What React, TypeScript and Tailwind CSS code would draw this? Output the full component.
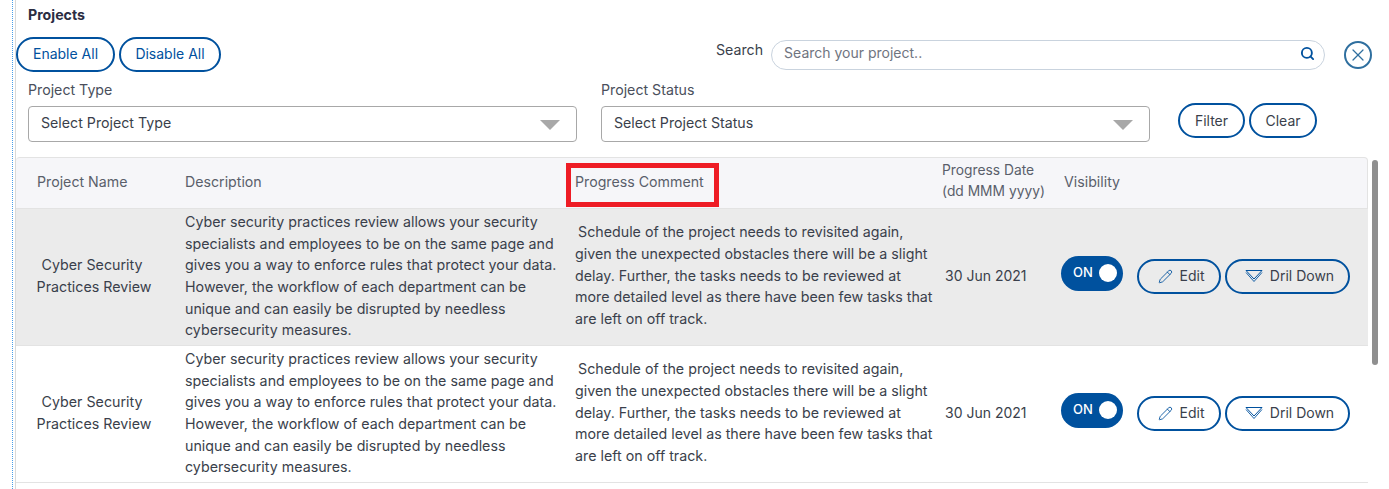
import { Pencil, Search, X } from 'lucide-react'

const description =
  'Cyber security practices review allows your security specialists and employees to be on the same page and gives you a way to enforce rules that protect your data. However, the workflow of each department can be unique and can easily be disrupted by needless cybersecurity measures.'
const comment =
  'Schedule of the project needs to revisited again, given the unexpected obstacles there will be a slight delay. Further, the tasks needs to be reviewed at more detailed level as there have been few tasks that are left on off track.'

const cols = 'grid grid-cols-[169px_390px_367px_122px_304px]'

function PillButton({ label, className }: { label: string; className: string }) {
  return (
    <button className={`h-[35px] rounded-full border-2 border-[#00519e] text-sm ${className}`}>
      {label}
    </button>
  )
}

function SelectBox({ label, width }: { label: string; width: string }) {
  return (
    <div className={`flex flex-col ${width}`}>
      <label className="h-[27px] text-[14.2px] leading-[22px] text-[#4a4f5c]">{label}</label>
      <div className="flex h-[36px] items-center justify-between rounded border border-[#a8a8a8] bg-white pb-[2px] pl-3 pr-4 text-[14.2px] text-[#3a3f4b]">
        Select {label}
        <span className="mt-1 h-0 w-0 border-x-[10px] border-t-[10px] border-x-transparent border-t-[#a8a8a8]" />
      </div>
    </div>
  )
}

function DrillIcon() {
  return (
    <svg width="18" height="14" viewBox="0 0 18 14" fill="none" stroke="#00519e" strokeWidth="1">
      <path d="M1 1.5h16L9 10z" />
      <path d="M1 3.5 9 12.5l8-9" strokeWidth="0.9" />
    </svg>
  )
}

function Row({ shaded }: { shaded?: boolean }) {
  return (
    <div className={`${cols} h-[137px] items-center border-b border-[#e3e3e3] text-[14.25px] leading-[21.7px] text-[#3a3f4b] ${shaded ? 'bg-[#ebebeb]' : 'bg-white'}`}>
      <div className="pb-[2px] pr-[13px] text-center">
        {'Cyber Security\u00a0'}
        <br />
        Practices Review
      </div>
      <div className="pb-[2px] pr-2">{description}</div>
      <div className="pb-[3px] pr-[9px] indent-[3px]">{comment}</div>
      <div className="pb-[3px] pl-[3px] text-sm">30 Jun 2021</div>
      <div className="flex items-center text-sm">
        <div className="-ml-[3px] mb-[7px] flex h-[35px] w-[62px] items-center justify-between rounded-full bg-[#00519e] pb-px pl-[12px] pr-[6px] text-[13px] font-medium text-white">
          <span className="pb-[2px]">ON</span>
          <span className="h-[18px] w-[18px] rounded-full bg-white" />
        </div>
        <button className="mb-[2px] ml-[14px] flex h-[35px] w-[84px] items-center justify-center gap-[7px] rounded-full border-2 border-[#00519e] pl-1">
          <Pencil size={15} strokeWidth={1.4} color="#00519e" />
          Edit
        </button>
        <button className="mb-[2px] ml-1 flex h-[35px] w-[125px] items-center justify-center gap-[7px] rounded-full border-2 border-[#00519e] pl-1">
          <DrillIcon />
          Dril Down
        </button>
      </div>
    </div>
  )
}

export default function App() {
  return (
    <div className="h-[489px] w-[1389px] overflow-hidden bg-white font-['Inter',sans-serif]">
      <div className="ml-3 h-full border-l border-dotted border-[#4a9ee8] pl-[2px]">
        <div className="h-full border-l border-[#d9d9d9]">
          <h2 className="ml-3 pt-[6px] text-[14.2px] font-bold leading-[18px] text-[#2b2d42]">Projects</h2>

          <div className="mt-[13px] flex h-[36px] items-start">
            <div className="flex gap-1">
              <PillButton label="Enable All" className="w-[99px] pb-[2px] text-[#00519e]" />
              <PillButton label="Disable All" className="w-[102px] pb-[2px] text-[#00519e]" />
            </div>
            <span className="ml-[495px] mt-px text-[14.2px] leading-[24px] text-[#3a3f4b]">Search</span>
            <div className="ml-2 mt-[3px] flex h-[30px] w-[554px] items-center justify-between rounded-full border border-[#c9d3de] pb-1 pl-3 pr-[9px] text-sm text-[#6f7480]">
              Search your project..
              <Search size={15} strokeWidth={3} color="#00519e" />
            </div>
            <span className="ml-[19px] mt-1 flex h-[28px] w-[28px] items-center justify-center rounded-full border-2 border-[#2f6f9f]">
              <X size={20} strokeWidth={1.5} color="#2f6f9f" />
            </span>
          </div>

          <div className="mt-[6px] flex items-end pl-3">
            <SelectBox label="Project Type" width="w-[549px]" />
            <div className="w-6" />
            <SelectBox label="Project Status" width="w-[549px]" />
            <div className="ml-7 flex gap-1 text-[#3a3f4b]">
              <PillButton label="Filter" className="mb-1 w-[67px]" />
              <PillButton label="Clear" className="mb-1 w-[68px]" />
            </div>
          </div>

          <div className="relative mt-[15px] flex gap-[4px]">
            <div className="w-[1352px]">
              <div className={`${cols} h-[52px] items-center rounded-t border-y border-r border-[#e3e3e3] bg-[#f6f6f9] pb-[3px] text-[14.2px] leading-[21px] text-[#5a5f6b]`}>
                <div className="pl-[21px]">Project Name</div>
                <div>Description</div>
                <div>Progress Comment</div>
                <div className="pb-px text-[13.8px]">
                  Progress Date
                  <br />
                  (dd MMM yyyy)
                </div>
                <div>Visibility</div>
              </div>
              <Row shaded />
              <Row />
            </div>
            <div className="mt-[3px] h-[205px] w-[6px] rounded-full bg-[#8f8f8f]" />
            <div className="absolute left-[550px] top-[6px] h-[44px] w-[153px] border-[5px] border-[#ee1c25]" />
          </div>
        </div>
      </div>
    </div>
  )
}
